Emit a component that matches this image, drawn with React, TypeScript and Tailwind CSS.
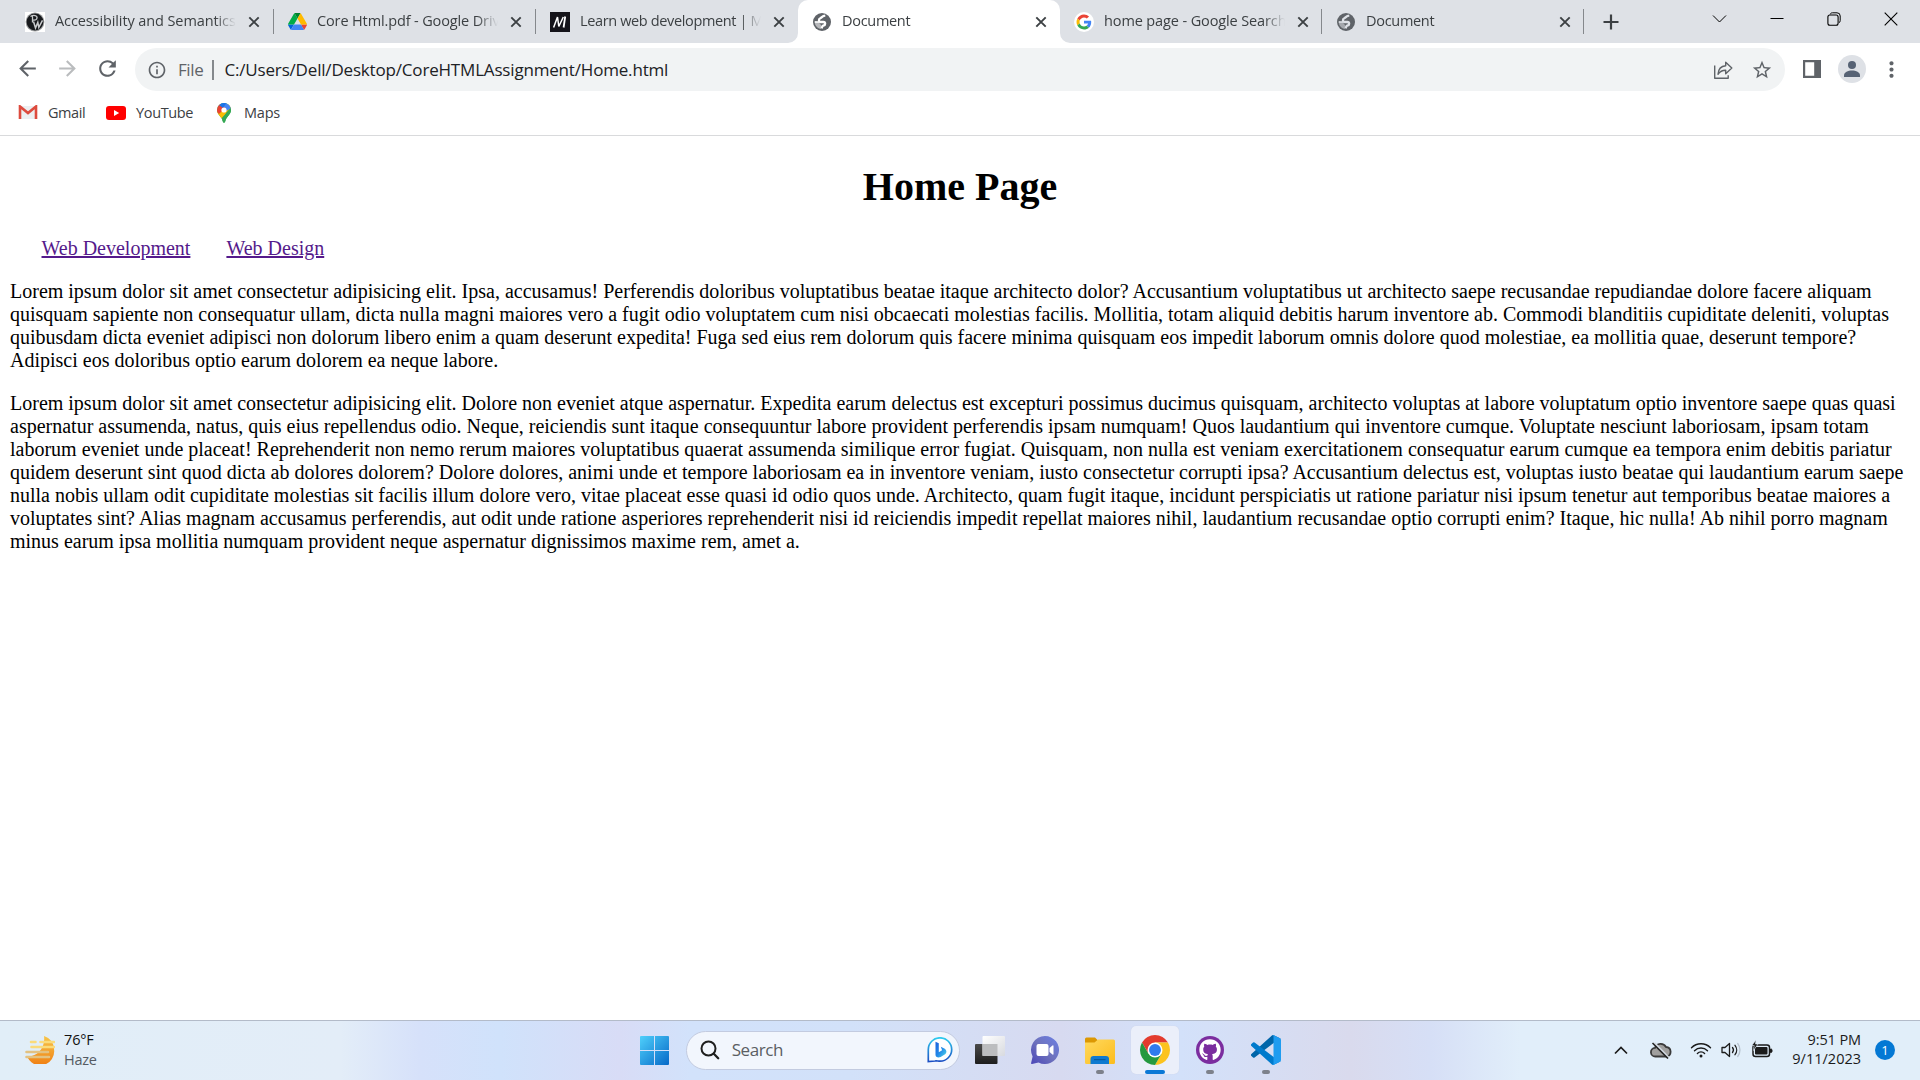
import React, { ReactNode } from "react";
import { MdArrowBack, MdArrowForward, MdRefresh, MdOutlineInfo, MdStarBorder, MdMoreVert } from "react-icons/md";
import { FaGithub } from "react-icons/fa";

function PwIcon() {
  return (
    <svg width="20" height="20" viewBox="0 0 20 20">
      <rect width="20" height="20" fill="#fff" />
      <circle cx="10" cy="10" r="9.4" fill="#9a9c9e" />
      <circle cx="10" cy="10" r="8.4" fill="#17191c" />
      <path d="M7.500 3.500v7M5.500 4.500c3-2 7-1 6.500 1.500-.3 1.700-2 2.300-4 2" fill="none" stroke="#c9cbcd" strokeWidth="1.300" />
      <path d="M8.500 9.500l2 6.500 2.300-5.600 1 5 3.700-7" fill="none" stroke="#c9cbcd" strokeWidth="1.500" />
    </svg>
  );
}

function DriveIcon() {
  return (
    <svg width="19" height="17" viewBox="0 0 87.3 78">
      <path d="m6.6 66.85 3.85 6.65c.8 1.4 1.95 2.5 3.3 3.3l13.75-23.8h-27.5c0 1.55.4 3.1 1.2 4.5z" fill="#0066da" />
      <path d="m43.65 25-13.75-23.8c-1.35.8-2.5 1.9-3.3 3.3l-25.4 44a9.06 9.06 0 0 0 -1.2 4.5h27.5z" fill="#00ac47" />
      <path d="m73.55 76.8c1.35-.8 2.5-1.9 3.3-3.3l1.6-2.75 7.65-13.25c.8-1.4 1.2-2.95 1.2-4.5h-27.502l5.852 11.5z" fill="#ea4335" />
      <path d="m43.65 25 13.75-23.8c-1.35-.8-2.9-1.2-4.5-1.2h-18.5c-1.6 0-3.15.45-4.5 1.2z" fill="#00832d" />
      <path d="m59.8 53h-32.3l-13.75 23.8c1.35.8 2.9 1.2 4.5 1.2h50.8c1.6 0 3.15-.45 4.5-1.2z" fill="#4285f4" />
      <path d="m73.4 26.5-12.7-22c-.8-1.4-1.95-2.5-3.3-3.3l-13.75 23.8 16.15 28h27.45c0-1.55-.4-3.1-1.2-4.5z" fill="#ffba00" />
    </svg>
  );
}

function MdnIcon() {
  return (
    <svg width="20" height="20" viewBox="0 0 20 20">
      <rect width="20" height="20" fill="#15141a" />
      <path d="M3.600 15.500 7.500 5 8.800 14.500 13.300 5" fill="none" stroke="#fff" strokeWidth="1.500" strokeLinejoin="bevel" />
      <path d="M15.200 4.500 13.600 15.500" stroke="#fff" strokeWidth="1.800" />
    </svg>
  );
}

function GoogleIcon() {
  return (
    <svg width="20" height="20" viewBox="-8 -8 64 64">
      <circle cx="24" cy="24" r="32" fill="#fff" />
      <path fill="#EA4335" d="M24 9.5c3.54 0 6.71 1.22 9.21 3.6l6.85-6.85C35.9 2.38 30.47 0 24 0 14.62 0 6.51 5.38 2.56 13.22l7.98 6.19C12.43 13.72 17.74 9.5 24 9.5z" />
      <path fill="#4285F4" d="M46.98 24.55c0-1.57-.15-3.09-.38-4.55H24v9.02h12.94c-.58 2.96-2.26 5.48-4.78 7.18l7.73 6c4.51-4.18 7.09-10.36 7.09-17.65z" />
      <path fill="#FBBC05" d="M10.53 28.59c-.48-1.45-.76-2.99-.76-4.59s.27-3.14.76-4.59l-7.98-6.19C.92 16.46 0 20.12 0 24c0 3.88.92 7.54 2.56 10.78l7.97-6.19z" />
      <path fill="#34A853" d="M24 48c6.48 0 11.93-2.13 15.89-5.81l-7.73-6c-2.15 1.45-4.92 2.3-8.16 2.3-6.26 0-11.57-4.22-13.47-9.91l-7.98 6.19C6.51 42.62 14.62 48 24 48z" />
    </svg>
  );
}

function Cross() {
  return (
    <svg width="12" height="12" viewBox="0 0 12 12" className="shrink-0">
      <path d="M1.3 1.3 10.7 10.7M10.7 1.3 1.3 10.7" stroke="#3c4043" strokeWidth="1.9" />
    </svg>
  );
}

function Globe({ land }: { land: string }) {
  return (
    <svg width="18" height="18" viewBox="0 0 18 18" className="shrink-0">
      <circle cx="9" cy="9" r="9" fill="#5f6368" />
      <path d="M12.300 2.600C9 2.800 9.200 4.500 7.300 5.200 5.300 6 5.600 8.800 7.500 9h2.800c2.400.2 2.600 3-.1 3.700-.8.200-1 1.500-1.800 2.600" fill="none" stroke={land} strokeWidth="2.300" />
      <path d="M1.700 8.300 6 9.500 8.200 12.200v3.900C4.500 15.800 1.500 12.500 1.700 8.300Z" fill={land} opacity=".55" />
      <path d="M1.800 9h4.500" stroke={land} strokeWidth="1.600" />
    </svg>
  );
}

type TabProps = { icon: ReactNode; title: string; tracking: string; active?: boolean; divider?: boolean; late?: boolean };

function Tab({ icon, title, tracking, active, divider, late }: TabProps) {
  return (
    <div className={"relative flex h-full w-[262px] shrink-0 items-center " + (late ? "pl-[14px] " : "pl-[13px] ") + (active ? "rounded-t-[10px] bg-white" : "")}>
      {active && (
        <>
          <svg className="absolute bottom-0 -left-[10px]" width="10" height="10"><path d="M10 0v10H0A10 10 0 0 0 10 0Z" fill="#fff" /></svg>
          <svg className="absolute -right-[10px] bottom-0" width="10" height="10"><path d="M0 0v10h10A10 10 0 0 1 0 0Z" fill="#fff" /></svg>
        </>
      )}
      <span className="flex h-5 w-5 shrink-0 items-center justify-center">{icon}</span>
      <span className={"mb-[2px] ml-[10px] w-[181px] overflow-hidden text-[14.5px] leading-5 whitespace-nowrap text-[#3c4043] [mask-image:linear-gradient(to_right,#000_160px,transparent_181px)] " + tracking}>
        {title}
      </span>
      <span className="ml-[12px] flex"><Cross /></span>
      {divider && <span className="absolute top-[9px] right-0 h-[25px] w-px bg-[#85888c]" />}
    </div>
  );
}

function TabStrip() {
  return (
    <div className="flex h-[43px] shrink-0 items-center bg-[#dee1e6] pl-3">
      <Tab icon={<PwIcon />} title="Accessibility and Semantics" tracking="tracking-[-0.1px]" divider />
      <Tab icon={<DriveIcon />} title="Core Html.pdf - Google Drive" tracking="tracking-[-0.13px]" divider />
      <Tab icon={<MdnIcon />} title="Learn web development | MDN" tracking="tracking-[-0.36px]" late />
      <Tab icon={<Globe land="#ffffff" />} title="Document" tracking="tracking-[-0.3px]" active late />
      <Tab icon={<GoogleIcon />} title="home page - Google Search" tracking="tracking-[-0.12px]" divider late />
      <Tab icon={<Globe land="#dee1e6" />} title="Document" tracking="tracking-[-0.3px]" divider late />
      <svg width="16" height="16" viewBox="0 0 16 16" className="ml-[19px]"><path d="M8 .5v15M.5 8h15" stroke="#3c4043" strokeWidth="2.2" /></svg>
      <div className="mr-[22px] mb-[6px] ml-auto flex items-center gap-[43px] text-black">
        <svg width="15" height="14" viewBox="0 0 15 14"><path d="M1 3.5 7.5 10 14 3.5" fill="none" stroke="currentColor" strokeWidth="1" /></svg>
        <svg width="14" height="14" viewBox="0 0 14 14"><path d="M.5 6.500h13" stroke="currentColor" strokeWidth="1" /></svg>
        <svg width="14" height="14" viewBox="0 0 14 14" fill="none" stroke="currentColor">
          <rect x=".9" y="3" width="10.2" height="10.2" rx="2" strokeWidth="1.1" />
          <path d="M3.3 2.3C3.6 1.2 4.3.8 5.4.8h4.6A3.2 3.2 0 0 1 13.2 4v4.6c0 1.100-.4 1.700-1.200 2.100" />
        </svg>
        <svg width="14" height="14" viewBox="0 0 14 14"><path d="M.7.7 13.300 13.300M13.300.7.7 13.300" stroke="currentColor" strokeWidth="1.100" /></svg>
      </div>
    </div>
  );
}

function Toolbar() {
  return (
    <div className="flex h-[53px] shrink-0 items-center text-[#5f6368]">
      <MdArrowBack size={25} className="mb-[2px] ml-[15px]" />
      <MdArrowForward size={25} className="mb-[2px] ml-[15px] text-[#babcbe]" />
      <MdRefresh size={25} className="mb-[2px] ml-[15px]" />
      <div className="ml-[15px] flex h-[43px] w-[1650px] shrink-0 items-center rounded-full bg-[#f1f3f4] pl-[12px] text-[17px]">
        <MdOutlineInfo size={20} />
        <span className="ml-[11px] w-[26px] tracking-[-0.4px]">File</span>
        <span className="ml-[8px] h-5 w-[1.5px] bg-[#85898d]" />
        <span className="ml-[11px] tracking-[-0.18px] text-[#202124]">C:/Users/Dell/Desktop/CoreHTMLAssignment/Home.html</span>
        <svg width="20" height="20" viewBox="0 0 20 20" fill="none" stroke="currentColor" strokeWidth="1.4" className="ml-auto" strokeLinejoin="round">
          <path d="M1.700 5.500v12.700H15.200v-3" />
          <path d="M5 14.300C5.300 9.500 8 6.200 12.700 5.800V2.200L18.800 8l-6.100 5.700v-3.400C9.300 10.200 7 11.500 5 14.300Z" />
        </svg>
        <MdStarBorder size={22} className="mr-[12px] ml-[18px]" />
      </div>
      <svg width="18" height="18" viewBox="0 0 18 18" className="mb-[2px] ml-[18px]"><path fill="currentColor" fillRule="evenodd" d="M0 0h18v18H0ZM2.200 2.200v13.600h9V2.200Z" /></svg>
      <svg width="28" height="28" viewBox="0 0 28 28" className="mb-px ml-[17px]">
        <circle cx="14" cy="14" r="14" fill="#dee1e6" />
        <circle cx="14" cy="10" r="4" fill="#566274" />
        <path d="M6 22v-1.800c0-3 4-4.700 8-4.700s8 1.700 8 4.700V22Z" fill="#566274" />
      </svg>
      <MdMoreVert size={25} className="mb-px ml-[13px]" />
    </div>
  );
}

function Bookmarks() {
  return (
    <div className="flex h-[40px] shrink-0 items-center border-b border-[#d9dadc] pb-[6px] pl-[18px] text-[14.5px] text-[#3c4043]">
      <svg width="20" height="15" viewBox="0 0 20 15">
        <path d="M2 1h16v13H2Z" fill="#eceff1" />
        <path d="M2 14V1.500l8 6.500 8-6.500V14" fill="none" stroke="#dd4b3e" strokeWidth="2.600" />
      </svg>
      <span className="ml-[10px] w-[38px] tracking-[-0.45px]">Gmail</span>
      <svg width="20" height="14" viewBox="0 0 20 14" className="ml-[20px]">
        <rect width="20" height="14" rx="3" fill="#f00" />
        <path d="M8 4v6l5.200-3Z" fill="#fff" />
      </svg>
      <span className="ml-[10px] w-[58px] tracking-[-0.35px]">YouTube</span>
      <svg width="14" height="20" viewBox="0 0 14 20" className="ml-[23px]">
        <clipPath id="pin"><path d="M7 0a7 7 0 0 1 7 7c0 4.500-4.500 6-5.800 11.500Q7 21 5.800 18.500C4.500 13 0 11.500 0 7a7 7 0 0 1 7-7Z" /></clipPath>
        <g clipPath="url(#pin)">
          <rect width="14" height="20" fill="#34a853" />
          <path d="M14 0v5L2 18-1 9 7 7 10 0Z" fill="#fbbc04" />
          <path d="M4.500-1H15v6L9 8 6 5Z" fill="#4285f4" />
          <path d="M3 0 8 5 2 11-1 8V3Z" fill="#ea4335" />
          <path d="M5-1h5L6 5 2.200 2.300Z" fill="#1a73e8" />
          <path d="M14 4.500V20H3.500L9.500 9.500Z" fill="#34a853" />
        </g>
        <circle cx="7" cy="7" r="2.600" fill="#fff" />
      </svg>
      <span className="ml-[13px] tracking-[-0.2px]">Maps</span>
    </div>
  );
}

const FIRST = [
  "Lorem ipsum dolor sit amet consectetur adipisicing elit. Ipsa, accusamus! Perferendis doloribus voluptatibus beatae itaque architecto dolor? Accusantium voluptatibus ut architecto saepe recusandae repudiandae dolore facere aliquam",
  "quisquam sapiente non consequatur ullam, dicta nulla magni maiores vero a fugit odio voluptatem cum nisi obcaecati molestias facilis. Mollitia, totam aliquid debitis harum inventore ab. Commodi blanditiis cupiditate deleniti, voluptas",
  "quibusdam dicta eveniet adipisci non dolorum libero enim a quam deserunt expedita! Fuga sed eius rem dolorum quis facere minima quisquam eos impedit laborum omnis dolore quod molestiae, ea mollitia quae, deserunt tempore?",
  "Adipisci eos doloribus optio earum dolorem ea neque labore.",
];

const SECOND = [
  "Lorem ipsum dolor sit amet consectetur adipisicing elit. Dolore non eveniet atque aspernatur. Expedita earum delectus est excepturi possimus ducimus quisquam, architecto voluptas at labore voluptatum optio inventore saepe quas quasi",
  "aspernatur assumenda, natus, quis eius repellendus odio. Neque, reiciendis sunt itaque consequuntur labore provident perferendis ipsam numquam! Quos laudantium qui inventore cumque. Voluptate nesciunt laboriosam, ipsam totam",
  "laborum eveniet unde placeat! Reprehenderit non nemo rerum maiores voluptatibus quaerat assumenda similique error fugiat. Quisquam, non nulla est veniam exercitationem consequatur earum cumque ea tempora enim debitis pariatur",
  "quidem deserunt sint quod dicta ab dolores dolorem? Dolore dolores, animi unde et tempore laboriosam ea in inventore veniam, iusto consectetur corrupti ipsa? Accusantium delectus est, voluptas iusto beatae qui laudantium earum saepe",
  "nulla nobis ullam odit cupiditate molestias sit facilis illum dolore vero, vitae placeat esse quasi id odio quos unde. Architecto, quam fugit itaque, incidunt perspiciatis ut ratione pariatur nisi ipsum tenetur aut temporibus beatae maiores a",
  "voluptates sint? Alias magnam accusamus perferendis, aut odit unde ratione asperiores reprehenderit nisi id reiciendis impedit repellat maiores nihil, laudantium recusandae optio corrupti enim? Itaque, hic nulla! Ab nihil porro magnam",
  "minus earum ipsa mollitia numquam provident neque aspernatur dignissimos maxime rem, amet a.",
];

function Paragraph({ lines }: { lines: string[] }) {
  return (
    <p className="mb-5 whitespace-nowrap">
      {lines.map((line) => (
        <span key={line} className="block">{line}</span>
      ))}
    </p>
  );
}

function Page() {
  return (
    <main className="flex-1 overflow-hidden px-[10px] pt-[28px] font-['Liberation_Serif',serif] text-[20px] leading-[23px] text-black">
      <h1 className="text-center text-[40px] leading-[46px] font-bold">Home Page</h1>
      <nav className="mt-[27px] mb-5 flex gap-[36px] pl-[31.5px] text-[#551a8b]">
        <a className="underline">Web Development</a>
        <a className="underline">Web Design</a>
      </nav>
      <Paragraph lines={FIRST} />
      <Paragraph lines={SECOND} />
    </main>
  );
}

function WeatherIcon() {
  return (
    <svg width="30" height="28" viewBox="0 0 30 28">
      <defs><linearGradient id="sun" x2="0" y2="1"><stop offset="0" stopColor="#f7c64a" /><stop offset="1" stopColor="#f07f13" /></linearGradient></defs>
      <path d="M19 0c6 2 10 7 10 13a14 14 0 0 1-27 7C9 22 21 14 19 0Z" fill="url(#sun)" />
      <g fill="none" strokeLinecap="round" strokeWidth="2.600">
        <path d="M6 6h4.500M15.500 6H29M6.500 11H29" stroke="#fadb7b" />
        <path d="M1.500 16H23M1.500 21H24" stroke="#e3c281" />
      </g>
    </svg>
  );
}

function WindowsLogo() {
  return (
    <svg width="29" height="29" viewBox="0 0 29 29">
      <defs><linearGradient id="win" x2="1" y2="1"><stop offset="0" stopColor="#4fd0fb" /><stop offset="1" stopColor="#0669c8" /></linearGradient></defs>
      <path fill="url(#win)" d="M1 0h13v14H0V1a1 1 0 0 1 1-1Zm14 0h13a1 1 0 0 1 1 1v13H15ZM0 15h14v14H1a1 1 0 0 1-1-1Zm15 0h14v13a1 1 0 0 1-1 1H15Z" />
    </svg>
  );
}

function BingIcon() {
  return (
    <svg width="26" height="26" viewBox="0 0 26 26">
      <defs>
        <linearGradient id="bingRing" x2="0" y2="1"><stop offset="0" stopColor="#2ecbee" /><stop offset="1" stopColor="#1b4fc4" /></linearGradient>
        <linearGradient id="bingMark" x1="0" x2="1" y2="1"><stop offset="0" stopColor="#1e62dc" /><stop offset=".5" stopColor="#2287e8" /><stop offset="1" stopColor="#4fd8e8" /></linearGradient>
      </defs>
      <path d="M1.300 24.500V12.500A11.700 11.700 0 1 1 13 24.200c-2 0-3.500-.6-5-.2Z" fill="#fff" stroke="url(#bingRing)" strokeWidth="1.700" />
      <path d="M8.500 4.800 11.800 6.200v9l3.300-2-1.300-3.400 4 2c2 1.200 2.200 4 .3 5.500l-4.500 2.700c-2.500 1-5.100.2-5.100-2.200Z" fill="url(#bingMark)" />
    </svg>
  );
}

function TaskViewIcon() {
  return (
    <svg width="30" height="28" viewBox="0 0 30 28">
      <defs>
        <linearGradient id="tvd" x2="0" y2="1"><stop offset="0" stopColor="#4a4a4a" /><stop offset="1" stopColor="#1d1d1d" /></linearGradient>
        <linearGradient id="tvl" x2="1" y2="1"><stop offset="0" stopColor="#fff" /><stop offset="1" stopColor="#d8dadf" /></linearGradient>
      </defs>
      <rect y="8" width="22.500" height="20" rx="1" fill="url(#tvd)" />
      <rect x="7.500" width="22.500" height="20" rx="1" fill="url(#tvl)" />
      <path d="M7.500 8h15v12h-15Z" fill="#bcbdbf" />
    </svg>
  );
}

function ChatIcon() {
  return (
    <svg width="28" height="28" viewBox="0 0 28 28">
      <defs><linearGradient id="chat" x1="1" x2="0" y2="1"><stop offset="0" stopColor="#6a7fe6" /><stop offset=".5" stopColor="#6f73bd" /><stop offset="1" stopColor="#4b47b8" /></linearGradient></defs>
      <path d="M14 0a14 14 0 1 1-6.500 26.400L1 28c-.8.100-1-.3-.9-.9L1.600 20.500A14 14 0 0 1 14 0Z" fill="url(#chat)" />
      <rect x="5.500" y="8" width="12" height="12" rx="2" fill="#fff" />
      <path d="m18.500 12 3-2.600c.6-.4 1-.1 1 .5v8.200c0 .6-.4.900-1 .5l-3-2.600Z" fill="#fff" />
    </svg>
  );
}

function FolderIcon() {
  return (
    <svg width="30" height="27" viewBox="0 0 30 27">
      <defs><linearGradient id="fold" x2="1" y2="1"><stop offset="0" stopColor="#ffd95e" /><stop offset="1" stopColor="#fcbc1c" /></linearGradient></defs>
      <path d="M0 2a1.500 1.500 0 0 1 1.500-1.500H10L13.500 4 10 8H0Z" fill="#dc9803" />
      <path d="M0 5.500h9.500L13 2.500h15.500A1.500 1.500 0 0 1 30 4v21.500a1.500 1.500 0 0 1-1.500 1.500h-27A1.500 1.500 0 0 1 0 25.500Z" fill="url(#fold)" />
      <path d="M5.500 27v-5a3 3 0 0 1 3-3h12.500a3 3 0 0 1 3 3v5Z" fill="#0f7ad0" />
      <path d="M9 22.600h11.500" stroke="#075a9f" strokeWidth="1.200" />
    </svg>
  );
}

function ChromeIcon() {
  return (
    <svg width="30" height="30" viewBox="0 0 48 48">
      <path d="M24 12h20.780A24 24 0 0 0 3.220 12.010L13.610 30Z" fill="#e33b2e" />
      <path d="M34.390 30.010 24 48A24 24 0 0 0 44.780 12H24Z" fill="#fcc31e" />
      <path d="M13.610 30.010 3.220 12.020A24 24 0 0 0 24 48l10.390-17.990Z" fill="#25993f" />
      <circle cx="24" cy="24" r="12" fill="#fff" />
      <circle cx="24" cy="24" r="9.500" fill="#2f7bee" />
    </svg>
  );
}

function GithubDesktopIcon() {
  return (
    <span className="flex h-7 w-7 items-center justify-center rounded-full bg-[#7b2d9f]">
      <FaGithub size={22} color="#fff" />
    </span>
  );
}

function VsCodeIcon() {
  return (
    <svg width="30" height="30" viewBox="0 0 100 100">
      <path d="M96.500 10.800 75.900.9a6.200 6.200 0 0 0-7.100 1.200L1.300 63.600a4.200 4.200 0 0 0 0 6.200l5.500 5a4.200 4.200 0 0 0 5.300.2L93.400 13.400a4.100 4.100 0 0 1 6.600 3.300v-.3a6.200 6.200 0 0 0-3.500-5.600Z" fill="#0065a9" />
      <path d="m96.500 89.200-20.600 9.900a6.200 6.200 0 0 1-7.100-1.200L1.300 36.400a4.200 4.200 0 0 1 0-6.200l5.500-5a4.200 4.200 0 0 1 5.300-.2l81.300 61.600a4.100 4.100 0 0 0 6.600-3.300v.3a6.200 6.200 0 0 1-3.500 5.600Z" fill="#007acc" />
      <path d="M75.900 99.100a6.200 6.200 0 0 1-7.100-1.200c2.300 2.300 6.200.7 6.200-2.600V4.700c0-3.300-3.900-4.900-6.200-2.600A6.200 6.200 0 0 1 75.900.9l20.600 9.900A6.200 6.200 0 0 1 100 16.400v67.200a6.200 6.200 0 0 1-3.500 5.600Z" fill="#1f9cf0" />
    </svg>
  );
}

function TaskButton({ children, open, focused }: { children: ReactNode; open?: boolean; focused?: boolean }) {
  return (
    <div className={"relative mr-[7.2px] flex h-12 w-12 shrink-0 items-center justify-center rounded-[5px] " + (focused ? "bg-[#ebeffa] shadow-[0_0_1px_#c5cbe0]" : "")}>
      {children}
      {open && <span className="absolute bottom-0 h-1 w-2 rounded-full bg-[#7d818b]" />}
      {focused && <span className="absolute bottom-0 h-1 w-5 rounded-full bg-[#0a78d6]" />}
    </div>
  );
}

function Tray() {
  return (
    <div className="ml-auto flex items-center pr-[25px] text-[#1b1b1b]">
      <svg width="14" height="9" viewBox="0 0 14 9"><path d="m1 7.500 6-6 6 6" fill="none" stroke="currentColor" strokeWidth="1.700" /></svg>
      <svg width="22" height="18" viewBox="0 0 22 18" className="ml-[22px]">
        <path d="M5.500 15.500a4.300 4.300 0 0 1-.5-8.600A6 6 0 0 1 16 6a4.800 4.800 0 0 1 .7 9.500Z" fill="#a09f9e" stroke="#3a3a3a" strokeWidth="1.800" />
        <path d="m4.500 2 14 14.500" stroke="#d5dce4" strokeWidth="2" />
        <path d="m2.500 2 15.500 15.500" stroke="#222" strokeWidth="1.600" />
      </svg>
      <svg width="22" height="16" viewBox="0 0 22 16" className="ml-[18px]" fill="none" stroke="currentColor" strokeWidth="1.400" strokeLinecap="round">
        <path d="M1.500 5.800a13.300 13.300 0 0 1 19 0M4.500 8.700a9.200 9.200 0 0 1 13 0M7.400 11.400a5 5 0 0 1 7.200 0" />
        <circle cx="11" cy="14" r="1.500" fill="currentColor" stroke="none" />
      </svg>
      <svg width="21" height="16" viewBox="0 0 21 16" className="ml-[9px]" fill="none" stroke="currentColor" strokeWidth="1.300" strokeLinejoin="round" strokeLinecap="round">
        <path d="M1 5.500h3L8.500 1.500v13L4 10.500H1ZM11.500 5.500a4 4 0 0 1 0 5M14 3.300a7.500 7.500 0 0 1 0 9.400" />
        <path d="M16.700 1.500a10.500 10.500 0 0 1 0 13" stroke="#b8c3cf" />
      </svg>
      <svg width="22" height="18" viewBox="0 0 22 18" className="mb-[3px] ml-[9px]">
        <rect x="2" y="5" width="16.500" height="11.500" rx="2.500" fill="none" stroke="currentColor" strokeWidth="1.500" />
        <rect x="4" y="7" width="12.500" height="7.500" rx="1" fill="currentColor" />
        <path d="M19.500 9h.8c1 0 1 3.500 0 3.500h-.8Z" fill="currentColor" stroke="currentColor" />
        <path d="M5 0 .8 5.500h2.400L2.500 10.500l4.500-6.500H4.500Z" fill="currentColor" stroke="#e1eefa" strokeWidth=".6" />
      </svg>
      <div className="mb-[2px] ml-[17px] w-[71px] text-right text-[14.5px] leading-[19.5px]">
        <div className="tracking-[-0.1px]">9:51 PM</div>
        <div>9/11/2023</div>
      </div>
      <span className="ml-[14px] flex h-5 w-5 items-center justify-center rounded-full bg-[#0478d4] text-[13px] leading-none text-white">1</span>
    </div>
  );
}

function Taskbar() {
  return (
    <div className="flex h-[60px] shrink-0 items-center border-t border-[#b3bbc9] bg-[linear-gradient(90deg,#e1eef8_0px,#e3edf8_340px,#d6e1fa_420px,#d0e2fb_500px,#d8dcf6_620px,#d2e2fb_690px,#d2e1f9_850px,#d7daf0_1060px,#d3e1fa_1180px,#d9daed_1350px,#d6dff6_1430px,#e1eefa_1520px,#e1eef9_1920px)] pb-px">
      <div className="flex w-[630.500px] shrink-0 items-center pl-[25px]">
        <WeatherIcon />
        <div className="mb-px ml-[9px] text-[14.5px] leading-[19.5px]">
          <div className="tracking-[-0.15px] text-[#111]">76°F</div>
          <div className="tracking-[-0.25px] text-[#555b63]">Haze</div>
        </div>
      </div>
      <TaskButton><WindowsLogo /></TaskButton>
      <div className="flex h-[39px] w-[274px] shrink-0 items-center rounded-full border border-[#c3cbe0] bg-[#f2f6fd] pr-[6px] pl-[13px]">
        <svg width="20" height="20" viewBox="0 0 20 20" fill="none" stroke="#1f1f1f" strokeWidth="2" strokeLinecap="round"><circle cx="8.500" cy="8.500" r="7" /><path d="m13.800 13.800 4.400 4.400" strokeWidth="2.300" /></svg>
        <span className="ml-[12px] text-[17px] tracking-[-0.4px] text-[#5b5e63]">Search</span>
        <span className="ml-auto"><BingIcon /></span>
      </div>
      <div className="ml-[6px] flex">
        <TaskButton><TaskViewIcon /></TaskButton>
        <TaskButton><ChatIcon /></TaskButton>
        <TaskButton open><FolderIcon /></TaskButton>
        <TaskButton focused><ChromeIcon /></TaskButton>
        <TaskButton open><GithubDesktopIcon /></TaskButton>
        <TaskButton open><VsCodeIcon /></TaskButton>
      </div>
      <Tray />
    </div>
  );
}

export default function App() {
  return (
    <div className="flex h-[1080px] w-[1920px] flex-col overflow-hidden bg-white font-['Open_Sans',sans-serif]">
      <TabStrip />
      <Toolbar />
      <Bookmarks />
      <Page />
      <Taskbar />
    </div>
  );
}
